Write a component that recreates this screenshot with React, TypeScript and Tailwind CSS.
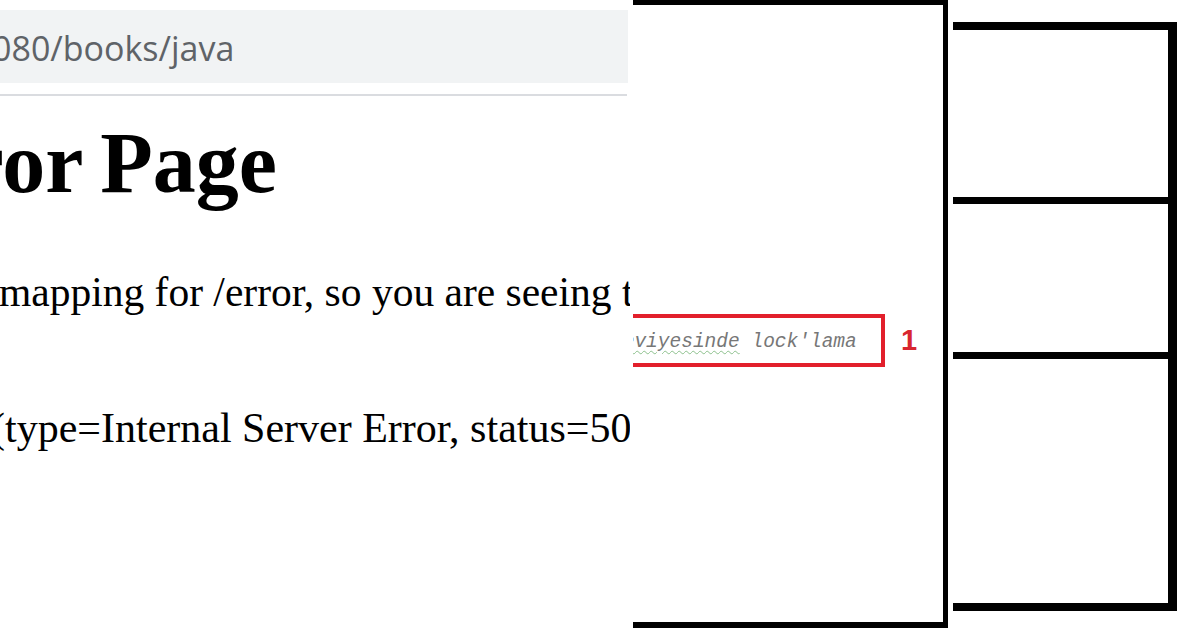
import React from 'react';

// Three screenshots side by side: a browser error page, a code snippet with a marker, an empty frame
function ErrorPagePanel() {
  return (
    <div className="w-[630px] h-[630px] shrink-0 overflow-hidden bg-white">
      {/* Address bar */}
      <div className="mt-[10px] h-[73px] w-[628px] bg-[#f1f3f4] pt-[21px]">
        <div className="ml-[-8px] whitespace-nowrap font-['Open_Sans',sans-serif] text-[34px] leading-none text-[#5f6368]">
          080/books/java
        </div>
      </div>
      <div className="mt-[11px] h-[2px] w-[627px] bg-[#dadce0]" />

      <h1 className="mt-[24px] ml-[-130px] whitespace-nowrap font-['Liberation_Serif',serif] text-[86px] font-bold leading-none text-black [word-spacing:-3px]">
        Error Page
      </h1>
      <p className="mt-[66px] ml-[-1px] whitespace-nowrap font-['Liberation_Serif',serif] text-[41.5px] leading-none text-black">
        mapping for /error, so you are seeing this as a fallback.
      </p>
      <p className="mt-[93px] ml-[-9px] whitespace-nowrap font-['Liberation_Serif',serif] text-[42px] leading-none text-black">
        (type=Internal Server Error, status=500).
      </p>
    </div>
  );
}

function SnippetPanel() {
  return (
    <div className="ml-[3px] h-[628px] w-[315px] shrink-0 border-t-[5px] border-r-[5px] border-b-[6px] border-black bg-white">
      <div className="mt-[309px] flex items-center">
        <div className="h-[53px] w-[252px] shrink-0 overflow-hidden border-y-4 border-r-4 border-l-0 border-[#e21f2b] pt-[15px]">
          <span className="block whitespace-nowrap font-['Liberation_Mono',monospace] text-[19.5px] italic leading-none text-[#777777] ml-[-22px]">
            <span className="underline decoration-wavy decoration-[#8cc08c] decoration-1 underline-offset-[3px]">seviyesinde</span> lock'lama
          </span>
        </div>
        <span className="ml-[16px] font-['Liberation_Sans',sans-serif] text-[29px] font-bold leading-none text-[#d8262f]">
          1
        </span>
      </div>
    </div>
  );
}

function FramePanel() {
  return (
    <div className="ml-[5px] mt-[22px] flex h-[589px] w-[224px] shrink-0 flex-col border-t-8 border-r-[9px] border-b-8 border-black bg-white">
      <div className="h-[174px] border-b-[7px] border-black" />
      <div className="h-[155px] border-b-[7px] border-black" />
      <div className="flex-1" />
    </div>
  );
}

export default function App() {
  return (
    <div className="flex h-[630px] w-[1200px] items-start overflow-hidden bg-white">
      <ErrorPagePanel />
      <SnippetPanel />
      <FramePanel />
    </div>
  );
}
